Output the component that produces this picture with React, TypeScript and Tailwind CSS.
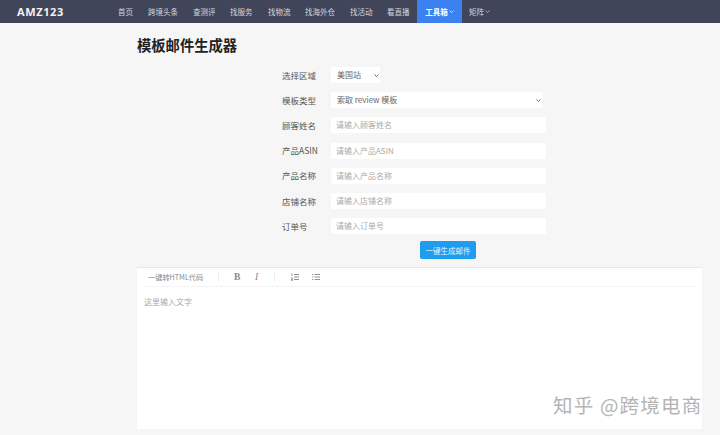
const font = { fontFamily: '"Noto Sans CJK SC", "Open Sans", sans-serif' };
const nav = ['首页', '跨境头条', '查测评', '找服务', '找物流', '找海外仓', '找活动', '看直播'];
const fields = [
  ['顾客姓名', '请输入顾客姓名'],
  ['产品ASIN', '请输入产品ASIN'],
  ['产品名称', '请输入产品名称'],
  ['店铺名称', '请输入店铺名称'],
  ['订单号', '请输入订单号'],
];

function Chev({ cls }: { cls: string }) {
  return (
    <svg viewBox="0 0 10 6" className={cls} fill="none" stroke="currentColor" strokeWidth="1.4">
      <path d="M1 1l4 4 4-4" />
    </svg>
  );
}

function Row({ label, children }: { label: string; children: React.ReactNode }) {
  return (
    <div className="flex h-[25.2px] items-center">
      <span className="w-[49px] whitespace-nowrap text-[8.5px] text-[#555]">{label}</span>
      {children}
    </div>
  );
}

export default function App() {
  return (
    <div style={font} className="relative flex h-[435px] w-[720px] flex-col overflow-hidden bg-[#f6f6f6]">
      <header className="flex h-[23px] shrink-0 items-stretch bg-[#40455a]">
        <span className="ml-[17px] mt-[4px] w-[101px] text-[11px] font-bold tracking-[0.6px] text-[#f2f2f2]" style={{ fontFamily: '"Open Sans", sans-serif' }}>AMZ123</span>
        <nav className="flex items-stretch text-[7.5px] text-[#d5d6dc]">
          {nav.map((n, i) => (
            <span key={n} className={`flex items-center ${i === 0 ? 'w-[30px]' : i === 1 ? 'w-[45px]' : i === 2 ? 'w-[37px]' : i === 3 ? 'w-[38px]' : i === 4 ? 'w-[37px]' : i === 5 ? 'w-[45px]' : i === 6 ? 'w-[37px]' : 'w-[30px]'}`}>{n}</span>
          ))}
          <span className="flex w-[45px] items-center justify-center gap-[1px] bg-[#3b82f0] font-bold text-white">工具箱<Chev cls="h-[3px] w-[5px]" /></span>
          <span className="ml-[7px] flex items-center gap-[1px]">矩阵<Chev cls="h-[3px] w-[5px]" /></span>
        </nav>
      </header>

      <main className="flex flex-1 flex-col pl-[137px]">
        <h1 className="mt-[12px] h-[20px] text-[14.3px] font-bold leading-[20px] text-[#222]">模板邮件生成器</h1>

        <section className="ml-[145px] mt-[7.5px] w-[264px]">
          <Row label="选择区域">
            <div className="flex h-[16px] w-[49px] items-center justify-between bg-white pl-[6px] pr-[1px] text-[8px] text-[#666]">
              美国站<Chev cls="h-[3px] w-[5px] text-[#333]" />
            </div>
          </Row>
          <Row label="模板类型">
            <div className="flex h-[16px] w-[212px] items-center justify-between bg-white pl-[6px] pr-[2px] text-[8px] text-[#666]">
              索取 review 模板<Chev cls="h-[3px] w-[5px] text-[#333]" />
            </div>
          </Row>
          {fields.map(([l, p]) => (
            <Row key={l} label={l}>
              <div className="flex h-[16px] w-[215px] items-center rounded-[2px] bg-white pl-[5px] text-[8px] text-[#aaa]">{p}</div>
            </Row>
          ))}
        </section>

        <button className="ml-[283px] mt-[2.5px] flex h-[18px] w-[56px] items-center justify-center rounded-[2px] bg-[#1d9cf0] text-[7.5px] text-[#e8f5ff]">一键生成邮件</button>

        <section className="mt-[8px] flex h-[162px] w-[565px] flex-col border-t border-[#e8e8e8] bg-white px-[7px]">
          <div className="flex h-[19px] items-center border-b border-[#f4f4f4] text-[7.2px] text-[#888]">
            <span className="ml-[4px] w-[70px] whitespace-nowrap">一键转HTML代码</span>
            <span className="h-[10px] w-px bg-[#eee]" />
            <span className="ml-[15px] w-[5px] text-[9.5px] font-bold leading-none" style={{ fontFamily: '"Liberation Serif", serif' }}>B</span>
            <span className="ml-[16px] w-[4px] text-[9.5px] italic leading-none" style={{ fontFamily: '"Liberation Serif", serif' }}>I</span>
            <span className="ml-[15px] h-[10px] w-px bg-[#eee]" />
            <svg viewBox="0 0 8 8" className="ml-[16px] h-[8px] w-[8px]" stroke="#777" strokeWidth="0.8"><path d="M3 1.5h5M3 4h5M3 6.5h5M1 .5v2.5M.3 5h1.4v1.2H.3v1.2h1.4" fill="none" /></svg>
            <svg viewBox="0 0 8 8" className="ml-[13px] h-[8px] w-[8px]" stroke="#777" strokeWidth="0.8"><path d="M2.5 1.5h5.5M2.5 4h5.5M2.5 6.5h5.5M0 1.5h1.2M0 4h1.2M0 6.5h1.2" fill="none" /></svg>
          </div>
          <p className="mt-[9px] text-[8px] text-[#aaa]">这里输入文字</p>
        </section>
      </main>

      <div className="absolute left-[553px] top-[391px] whitespace-nowrap text-[19.5px] leading-[28px] tracking-[1.2px] text-[#b4b4b4]">知乎 @跨境电商</div>
    </div>
  );
}
